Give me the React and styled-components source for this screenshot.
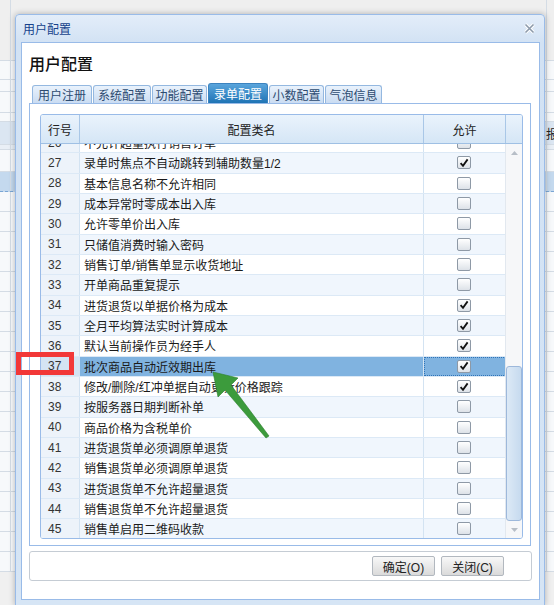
import React from "react";
import styled, { createGlobalStyle } from "styled-components";

const GlobalStyle = createGlobalStyle`
  html, body {
    margin: 0;
    padding: 0;
  }
  body {
    font-family: "Liberation Sans", "Noto Sans CJK SC", sans-serif;
    font-size: 12px;
    color: #222;
    background: #f0f0f0;
  }
`;

const Page = styled.div`
  position: relative;
  width: 554px;
  height: 605px;
  overflow: hidden;
  background: #f0f0f0;
`;

/* the app behind the dialog */
const Backdrop = styled.div`
  display: flex;
  flex-direction: column;
  height: 100%;
`;

const BackBand = styled.div`
  flex: 0 0 ${(p) => p.$h}px;
  box-sizing: border-box;
  display: flex;
  align-items: center;
  padding-left: 546px;
  border-bottom: 1px ${(p) => (p.$active ? "dashed #7aa6d4" : "solid #d4dce5")};
  background-color: ${(p) => p.$bg || "#f7f9fb"};
  background-image: linear-gradient(
    to right,
    transparent 10px,
    #d4dce5 10px,
    #d4dce5 11px,
    transparent 11px,
    transparent 546px,
    #d4dce5 546px,
    #d4dce5 547px,
    transparent 547px
  );
  font-size: 12px;
  color: #222;
`;

const Window = styled.div`
  position: absolute;
  left: 15px;
  top: 14px;
  width: 530px;
  height: 592px;
  box-sizing: border-box;
  display: flex;
  flex-direction: column;
  border: 1px solid #99bbe8;
  border-radius: 4px 4px 0 0;
  background: linear-gradient(#e3edf9, #d2e2f4 28px, #d6e5f5);
  box-shadow: 0 0 6px rgba(0, 0, 0, 0.28);
`;

const TitleBar = styled.div`
  flex: 0 0 27px;
  display: flex;
  align-items: center;
  justify-content: space-between;
  padding: 0 9px 0 7px;
  color: #15428b;
  font-size: 12px;
`;

const Body = styled.div`
  flex: 1;
  margin: 0 4px 5px 5px;
  display: flex;
  flex-direction: column;
  background: #fff;
  border: 1px solid #99bbe8;
`;

const Heading = styled.div`
  flex: 0 0 40px;
  line-height: 40px;
  padding-left: 7px;
  font-family: "Noto Sans CJK SC", sans-serif;
  font-size: 16px;
  font-weight: 500;
  color: #111;
`;

const TabStrip = styled.div`
  flex: 0 0 20px;
  display: flex;
  align-items: flex-end;
  gap: 1px;
  margin-left: 10px;
`;

const Tab = styled.div`
  width: ${(p) => p.$w}px;
  height: ${(p) => (p.$active ? 20 : 18)}px;
  box-sizing: border-box;
  display: flex;
  align-items: center;
  justify-content: center;
  border: 1px solid ${(p) => (p.$active ? "#3c83bf" : "#94b8e0")};
  border-bottom: none;
  border-radius: 3px 3px 0 0;
  background: ${(p) =>
    p.$active
      ? "linear-gradient(#5aa5dc, #1f74b5)"
      : "linear-gradient(#e9f2fc, #cadcf2)"};
  color: ${(p) => (p.$active ? "#fff" : "#2d4b70")};
  font-family: "Noto Sans CJK SC", sans-serif;
  font-size: 12px;
  line-height: 1;
`;

const TabPanel = styled.div`
  flex: 0 0 443px;
  width: 502px;
  margin-left: 7px;
  box-sizing: border-box;
  border: 1px solid #99bbe8;
  padding: 10px 7px 0 10px;
`;

const Grid = styled.div`
  width: 483px;
  height: 425px;
  box-sizing: border-box;
  display: flex;
  flex-direction: column;
  border: 1px solid #99bbe8;
  border-radius: 3px;
  overflow: hidden;
`;

const GridHeader = styled.div`
  flex: 0 0 29px;
  box-sizing: border-box;
  display: grid;
  grid-template-columns: 39px 344px 82px 16px;
  border-bottom: 1px solid #9fc0e4;
  background: linear-gradient(#eaf3fc, #d5e6f6);
`;

const HeaderCell = styled.div`
  display: flex;
  align-items: center;
  justify-content: center;
  border-right: ${(p) => (p.$last ? "none" : "1px solid #a9c7e7")};
  font-family: "Noto Sans CJK SC", sans-serif;
  font-size: 12px;
  color: #222;
`;

const GridBody = styled.div`
  flex: 1;
  display: flex;
  overflow: hidden;
`;

const RowsViewport = styled.div`
  flex: 1;
  overflow: hidden;
`;

const RowList = styled.div`
  margin-top: -11px;
`;

const Row = styled.div`
  display: grid;
  grid-template-columns: 39px 344px 82px;
  height: 20.33px;
  box-sizing: border-box;
  border-bottom: 1px solid #dce9f6;
  background: ${(p) => (p.$odd ? "#f0f6fd" : "#fff")};
`;

const NumCell = styled.div`
  display: flex;
  align-items: center;
  padding-left: 7px;
  border-right: 1px solid #d3e3f2;
  background: ${(p) => (p.$selected ? "#d4e4f3" : "#edf3fa")};
  color: #333;
`;

const NameCell = styled.div`
  display: flex;
  align-items: center;
  padding-left: 4px;
  border-right: 1px solid #d3e3f2;
  background: ${(p) => (p.$selected ? "#80b3e0" : "transparent")};
  color: #1a1a1a;
  white-space: nowrap;
  overflow: hidden;
`;

const CheckCell = styled.div`
  display: flex;
  align-items: center;
  justify-content: center;
  padding-right: 3px;
  background: ${(p) => (p.$selected ? "#80b3e0" : "transparent")};
  outline: ${(p) => (p.$selected ? "1px dotted #2f74b8" : "none")};
  outline-offset: -1px;
`;

const Checkbox = styled.div`
  width: 14px;
  height: 13px;
  box-sizing: border-box;
  display: flex;
  align-items: center;
  justify-content: center;
  border: 1px solid #8e99a6;
  border-radius: 2px;
  background: linear-gradient(#ffffff, #dde2e8);
`;

const Scrollbar = styled.div`
  flex: 0 0 16px;
  display: flex;
  flex-direction: column;
  background: #f6f7f9;
  border-left: 1px solid #e2e8ef;
`;

const ScrollArrow = styled.div`
  flex: 0 0 17px;
  display: flex;
  align-items: center;
  justify-content: center;
`;

const ScrollTrack = styled.div`
  flex: 1;
  display: flex;
  flex-direction: column;
  justify-content: flex-end;
`;

const ScrollThumb = styled.div`
  height: 155px;
  box-sizing: border-box;
  border: 1px solid #9db8db;
  border-radius: 3px;
  background: linear-gradient(to right, #dce9f6, #c6daef);
`;

const ButtonBar = styled.div`
  flex: 0 0 30px;
  box-sizing: border-box;
  width: 503px;
  margin: 5px 0 0 7px;
  display: flex;
  align-items: center;
  justify-content: flex-end;
  gap: 6px;
  padding-right: 27px;
  border: 1px solid #c5ccd4;
  border-radius: 3px;
`;

const Button = styled.button`
  width: 63px;
  height: 20px;
  padding: 0;
  box-sizing: border-box;
  border: 1px solid #b2b8bf;
  border-radius: 2px;
  background: linear-gradient(#f8f8f8, #dadada);
  font-family: "Liberation Sans", "Noto Sans CJK SC", sans-serif;
  font-size: 12px;
  color: #222;
`;

const Marker = styled.div`
  position: absolute;
  left: 16px;
  top: 352px;
  width: 58px;
  height: 23px;
  box-sizing: border-box;
  border: 5px solid #f23838;
`;

const ArrowLayer = styled.svg`
  position: absolute;
  left: 0;
  top: 0;
  pointer-events: none;
`;

const tabs = [
  { label: "用户注册", w: 60 },
  { label: "系统配置", w: 58 },
  { label: "功能配置", w: 55 },
  { label: "录单配置", w: 60, active: true },
  { label: "小数配置", w: 55 },
  { label: "气泡信息", w: 57 },
];

const rows = [
  [26, "不允许超量执行销售订单", false],
  [27, "录单时焦点不自动跳转到辅助数量1/2", true],
  [28, "基本信息名称不允许相同", false],
  [29, "成本异常时零成本出入库", false],
  [30, "允许零单价出入库", false],
  [31, "只储值消费时输入密码", false],
  [32, "销售订单/销售单显示收货地址", false],
  [33, "开单商品重复提示", false],
  [34, "进货退货以单据价格为成本", true],
  [35, "全月平均算法实时计算成本", true],
  [36, "默认当前操作员为经手人", true],
  [37, "批次商品自动近效期出库", true],
  [38, "修改/删除/红冲单据自动更新价格跟踪", true],
  [39, "按服务器日期判断补单", false],
  [40, "商品价格为含税单价", false],
  [41, "进货退货单必须调原单退货", false],
  [42, "销售退货单必须调原单退货", false],
  [43, "进货退货单不允许超量退货", false],
  [44, "销售退货单不允许超量退货", false],
  [45, "销售单启用二维码收款", false],
];

const backBands = [
  { h: 61, bg: "#efefef" },
  { h: 19 },
  { h: 12 },
  { h: 21 },
  { h: 9 },
  { h: 23, bg: "#dbe6f2", text: "报" },
  { h: 5, bg: "#e9eff6" },
  { h: 22 },
  { h: 20, bg: "#c4d9ee", active: true },
  { h: 20 },
  { h: 20 },
  { h: 20 },
  { h: 20 },
  { h: 20 },
  { h: 20 },
  { h: 20 },
  { h: 20 },
  { h: 20 },
  { h: 20 },
  { h: 20 },
  { h: 20 },
  { h: 20 },
  { h: 20 },
  { h: 20 },
  { h: 20 },
  { h: 20 },
  { h: 20 },
  { h: 20 },
];

const CloseIcon = () => (
  <svg width="11" height="11" viewBox="0 0 11 11">
    <path d="M1.5 1.5 L9.5 9.5 M9.5 1.5 L1.5 9.5" stroke="#fff" strokeWidth="3.4" />
    <path d="M1.5 1.5 L9.5 9.5 M9.5 1.5 L1.5 9.5" stroke="#8c9aab" strokeWidth="1.6" />
  </svg>
);

const Tick = () => (
  <svg width="10" height="10" viewBox="0 0 10 10">
    <path d="M1.6 5.2 L4 7.8 L8.6 1.4" fill="none" stroke="#111" strokeWidth="1.8" />
  </svg>
);

const Triangle = ({ down }) => (
  <svg width="7" height="4" viewBox="0 0 7 4">
    <path d={down ? "M0 0 L7 0 L3.5 4 Z" : "M0 4 L7 4 L3.5 0 Z"} fill="#b7bec7" />
  </svg>
);

export default function App() {
  return (
    <Page>
      <GlobalStyle />
      <Backdrop>
        {backBands.map((b, i) => (
          <BackBand key={i} $h={b.h} $bg={b.bg} $active={b.active}>
            {b.text}
          </BackBand>
        ))}
      </Backdrop>

      <Window>
        <TitleBar>
          <span>用户配置</span>
          <CloseIcon />
        </TitleBar>
        <Body>
          <Heading>用户配置</Heading>
          <TabStrip>
            {tabs.map((t) => (
              <Tab key={t.label} $w={t.w} $active={t.active}>
                {t.label}
              </Tab>
            ))}
          </TabStrip>
          <TabPanel>
            <Grid>
              <GridHeader>
                <HeaderCell>行号</HeaderCell>
                <HeaderCell>配置类名</HeaderCell>
                <HeaderCell>允许</HeaderCell>
                <HeaderCell $last />
              </GridHeader>
              <GridBody>
                <RowsViewport>
                  <RowList>
                    {rows.map(([n, name, on]) => {
                      const selected = n === 37;
                      return (
                        <Row key={n} $odd={n % 2 === 1}>
                          <NumCell $selected={selected}>{n}</NumCell>
                          <NameCell $selected={selected}>{name}</NameCell>
                          <CheckCell $selected={selected}>
                            <Checkbox>{on && <Tick />}</Checkbox>
                          </CheckCell>
                        </Row>
                      );
                    })}
                  </RowList>
                </RowsViewport>
                <Scrollbar>
                  <ScrollArrow>
                    <Triangle />
                  </ScrollArrow>
                  <ScrollTrack>
                    <ScrollThumb />
                  </ScrollTrack>
                  <ScrollArrow>
                    <Triangle down />
                  </ScrollArrow>
                </Scrollbar>
              </GridBody>
            </Grid>
          </TabPanel>
          <ButtonBar>
            <Button>确定(O)</Button>
            <Button>关闭(C)</Button>
          </ButtonBar>
        </Body>
      </Window>

      <Marker />
      <ArrowLayer width="554" height="605" viewBox="0 0 554 605">
        <polygon
          points="213,372 238,378 231,385 269,436 266,438 225,390 218,397"
          fill="#3c9b3c"
          stroke="#2d7f2d"
          strokeWidth="0.6"
          strokeLinejoin="round"
        />
      </ArrowLayer>
    </Page>
  );
}
